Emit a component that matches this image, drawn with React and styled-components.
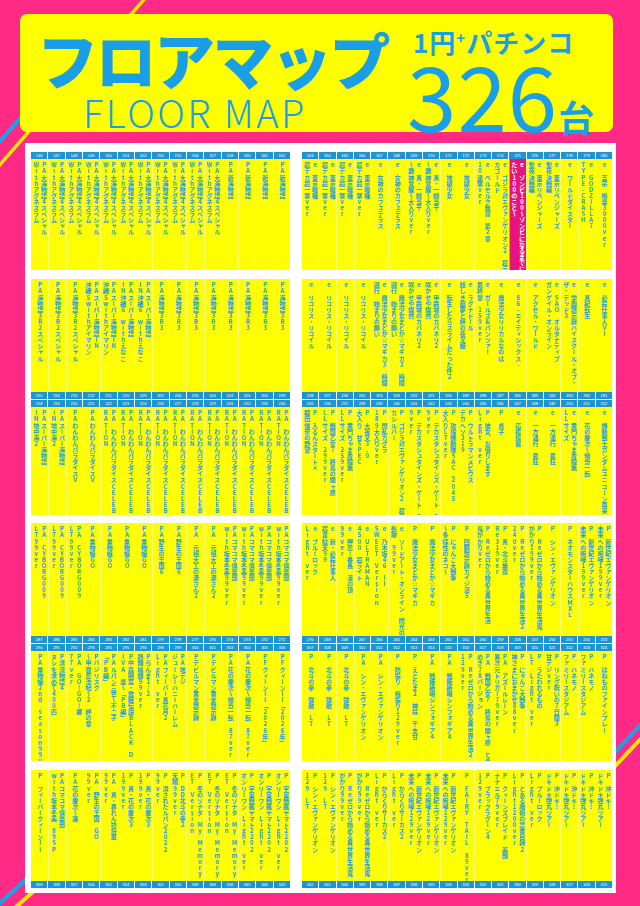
import React from 'react';
import styled, { createGlobalStyle } from 'styled-components';

const GlobalStyle = createGlobalStyle`
  html, body {
    margin: 0;
    padding: 0;
  }

  body {
    background: #fe2a86;
    font-family: "Noto Sans CJK JP", "Noto Sans", sans-serif;
  }
`;

const Page = styled.div`
  position: relative;
  width: 640px;
  height: 906px;
  overflow: hidden;
  box-sizing: border-box;
  padding-top: 14px;
  background: #fe2a86;
`;

const Decor = styled.svg`
  position: absolute;
  top: 0;
  left: 0;
  z-index: 0;
`;

const Header = styled.header`
  position: relative;
  z-index: 1;
  display: flex;
  width: 593px;
  height: 118px;
  margin-left: 20px;
  box-sizing: border-box;
  padding: 8px 0 0 17px;
  border-radius: 7px;
  background: #ffff00;
  color: #1a9fe6;
`;

const TitleBox = styled.div`
  display: flex;
  flex-direction: column;
  width: 374px;
`;

const TitleJa = styled.h1`
  margin: 0;
  font-size: 61px;
  font-weight: 900;
  line-height: 74px;
  letter-spacing: -2.5px;
  white-space: nowrap;
`;

const TitleEn = styled.div`
  margin: -4px 0 0 46px;
  font-size: 38px;
  font-weight: 300;
  line-height: 40px;
  letter-spacing: 2.5px;
  white-space: nowrap;
`;

const CountBox = styled.div`
  display: flex;
  flex-direction: column;
  margin-left: 2px;
`;

const Kind = styled.div`
  margin-top: 4px;
  font-size: 26px;
  font-weight: 700;
  line-height: 32px;
  letter-spacing: 1px;
  white-space: nowrap;

  sup {
    font-size: 15px;
    vertical-align: 9px;
    line-height: 0;
  }
`;

const CountRow = styled.div`
  display: flex;
  align-items: baseline;
  margin: -9px 0 0 -6px;
  white-space: nowrap;
`;

const Count = styled.span`
  font-size: 89px;
  font-weight: 400;
  line-height: 89px;
  letter-spacing: 1px;
`;

const Unit = styled.span`
  margin-left: 0;
  font-size: 36px;
  font-weight: 700;
  line-height: 36px;
`;

const Panel = styled.main`
  position: relative;
  z-index: 1;
  display: flex;
  flex-direction: column;
  justify-content: space-between;
  width: 591px;
  height: 750px;
  margin: 11px 0 0 25px;
  box-sizing: border-box;
  padding: 9px 4px 5px 6px;
  background: #ffffff;
`;

const Band = styled.section`
  display: grid;
  grid-template-columns: 259px 310px;
  column-gap: 12px;
`;

const Block = styled.div`
  display: flex;
  flex-direction: column;
`;

const NumRow = styled.div`
  display: grid;
  grid-template-columns: repeat(${(p) => p.$n}, 1fr);
  column-gap: 1px;
  height: 7px;
  margin-bottom: ${(p) => (p.$gap ? '1px' : '0')};
  background: #ffffff;
`;

const NumCell = styled.div`
  overflow: hidden;
  background: #1d95d3;
  color: #ffffff;
  font-family: "Liberation Sans", Arial, sans-serif;
  font-size: 4px;
  line-height: 7px;
  text-align: center;
`;

const TextRow = styled.div`
  display: grid;
  grid-template-columns: repeat(${(p) => p.$n}, 1fr);
  height: ${(p) => p.$h}px;
  background: #ffff00;
`;

const Cell = styled.div`
  display: flex;
  justify-content: center;
  overflow: hidden;
  box-sizing: border-box;
  padding-top: 3px;
  border-left: 1px solid rgba(255, 255, 255, 0.45);
  background: ${(p) => (p.$hl ? '#e8137d' : 'transparent')};
  color: ${(p) => (p.$hl ? '#ffffff' : '#1c9ce2')};

  &:first-child {
    border-left: none;
  }
`;

const VText = styled.span`
  writing-mode: vertical-rl;
  text-orientation: upright;
  font-size: 6.1px;
  font-weight: 700;
  line-height: 7.8px;
  white-space: nowrap;
`;

// [count, text] pairs expand into columns; "|" splits the vertical lines
const expand = (list) => list.flatMap(([c, t, hl]) => Array.from({ length: c }, () => ({ t, hl })));
const range = (a, b) => {
  const out = [];
  if (a <= b) for (let i = a; i <= b; i++) out.push(i);
  else for (let i = a; i >= b; i--) out.push(i);
  return out;
};

const band1 = {
  left: {
    top: [146, 147, 148, 149, 150, 151, 152, 154, 155, 156, 157, 158, 160, 161, 162],
    topText: expand([
      [11, 'PA大海物語4スペシャル|Withアグネスラム'],
      [4, 'PA新海物語'],
    ]),
  },
  right: {
    top: range(163, 180),
    topText: expand([
      [4, 'e 東京喰種|超デカ超一撃ver'],
      [2, 'e 女神のカフェテラス'],
      [2, 'e 真・一騎当千|〜覇神覚醒〜大入りver'],
      [2, 'e 地獄少女'],
      [1, 'e ベルセルク無双 第2章|10連撃ver'],
      [1, 'e ゴジラ対エヴァンゲリオン2 超デ|カゴールド'],
      [1, 'e ゾンビ100〜ゾンビになるまでにし|たい100のこと〜', true],
      [2, 'e 東京リベンジャーズ|聖夜決戦編'],
      [1, 'e ワールドダイスター'],
      [1, 'e GODZILLA7|TYPE-CRASH'],
      [1, 'e 吉宗 極楽3000ver'],
    ]),
  },
};

const band2 = {
  left: {
    upper: expand([
      [3, 'PA海物語3R2スペシャル'],
      [2, 'PAスーパー海物語IN|沖縄5withアイマリン'],
      [2, 'PAスーパー海物語|IN沖縄6 withえなこ'],
      [8, 'PA海物語3R3'],
    ]),
    top: [215, 214, 213, 212, 211, 210, 209, 207, 206, 205, 204, 203, 201, 200, 199],
    bottom: [218, 219, 220, 221, 222, 223, 224, 226, 227, 228, 229, 231, 232, 233, 234],
    lower: expand([
      [2, 'PAスーパー海物語|IN地中海2'],
      [2, 'PAわんわんパラダイスV'],
      [11, 'PA わんわんパラダイスCELEB|RATION'],
    ]),
  },
  right: {
    upper: expand([
      [4, 'e リコリス・リコイル'],
      [2, 'e 魔法少女まどか☆マギカ3 時間|遡行 始まりの願い'],
      [2, 'e 甲鉄城のカバネリ2|咲かせや燦然'],
      [1, 'e 転生したらスライムだった件2'],
      [1, 'e ラグナドール|妖しき廻夢と絆の夜叉姫'],
      [1, 'e ガールズ&パンツァー|最終章 159ver'],
      [1, 'e 魔法少女リリカルなのは'],
      [1, 'e 86-エイティシックス-'],
      [1, 'e アクセル・ワールド'],
      [1, 'e SAO オルタナティブ|ガンゲイル・オンライン'],
      [1, 'e 学園黙示録ハイスクール・オブ・|ザ・デッド3'],
      [1, 'e 真紀転生'],
      [1, 'e 必殺仕事人VI'],
    ]),
    top: range(198, 181),
    bottom: range(235, 252),
    lower: expand([
      [1, 'P 入るんスタート×|織田信奈の野望'],
      [1, 'P 戦国乙女7 終焉の関ヶ原|LLサイズ 299ver'],
      [1, 'P 黄門ちゃま寿限無|LLサイズ 259ver'],
      [1, 'P 大夜叉3.0|大入り 甘SPEC'],
      [1, 'P 閃乱カグラ|189大入りver'],
      [1, 'P ゴジラ対エヴァンゲリオン2 超デ|カシルバー'],
      [2, 'P デカスタシュタインズ・ゲート 9|9ver'],
      [1, 'P 攻殻機動隊SAC_2045|大入りLTver'],
      [1, 'P ウルトラマンメビウス|デカヘソ319'],
      [1, 'P 彼女、お借りします|Light ver'],
      [1, 'P 貞子'],
      [1, 'e 応援搭載'],
      [2, 'e 一方通行 最狂'],
      [1, 'e 黄門ちゃま寿限無|LLサイズ'],
      [1, 'e 花の慶次〜傾奇一転'],
      [1, 'e 機動戦士ガンダムユニコーン再来'],
    ]),
  },
};

const band3 = {
  left: {
    upper: expand([
      [3, 'PA CYBORG009|LT99ver'],
      [4, 'PA乗物娘GO'],
      [2, 'PA野生の王国6'],
      [2, 'PA 元祖大工の源さん2'],
      [4, 'PAコマコマ倶楽部|with坂本冬美99ver'],
    ]),
    top: [287, 286, 285, 284, 283, 282, 281, 279, 278, 277, 276, 274, 273, 272, 271],
    bottom: [290, 291, 292, 293, 294, 295, 296, 298, 299, 300, 301, 303, 304, 305, 306],
    lower: expand([
      [1, 'PA乗物娘2nd season99ver'],
      [1, 'P清流物語4|ヌシを求めて400匹'],
      [1, 'PA GO!GO!郷|77ver'],
      [1, 'Pバジリスク|〜甲賀忍法帖〜2 絆の章'],
      [1, 'PAルパン三世〜不二子|「PB編」'],
      [1, 'P中森明菜・歌姫伝説BLACK D|IVA 楽〜「PB編」'],
      [1, 'Pらんま1/2|熱闘格闘99ver'],
      [1, 'PAフィーバー真花月2|Light ver'],
      [1, 'PA地デジ|ジューシーハニーハーレム'],
      [2, 'Pデビルマン黄金黙示録'],
      [2, 'PA花の慶次〜傾奇一転 87ver'],
      [2, 'PFクィーンII「2026年」'],
    ]),
  },
  right: {
    upper: expand([
      [1, 'e ブルーロック|Light ver'],
      [1, 'e 新・必殺仕事人|超韋駄天99'],
      [1, 'e 押忍!番長 漢の頂|99ver'],
      [1, 'e ULTRAMAN|4500 超ライト'],
      [1, 'e 乃木坂46 II|SWEET Version'],
      [1, 'e ソードアート・オンライン 閃光の|軌跡 99ver'],
      [2, 'P 魔法少女まどか☆マギカ'],
      [1, 'P にゃんこ大戦争|〜多様性のネコ〜'],
      [1, 'P 回胴黙示録カイジ沼5'],
      [1, 'P Reゼロから始める異世界生活|鬼がかりver'],
      [1, 'P 真・北斗無双|Re319ver'],
      [1, 'P Reゼロから始める異世界生活2|240ver'],
      [1, 'P Reゼロから始める異世界生活鬼|がかり199ver'],
      [1, 'P シン・エヴァンゲリオン'],
      [1, 'P ネオモンスターハウスMXL'],
      [2, 'P 新世紀エヴァンゲリオン|未来への咆哮199ver'],
    ]),
    top: range(270, 253),
    bottom: range(307, 324),
    lower: expand([
      [3, 'P 北斗の拳 強敵 LT'],
      [2, 'PA シン・エヴァンゲリオン'],
      [1, 'P 防振り 極振り129ver'],
      [1, 'P えとたま2 神様 干支甘'],
      [2, 'PA 戦姫絶唱シンフォギア4'],
      [1, 'P Reゼロから始める異世界生活2|129ver'],
      [1, 'PA 戦国乙女7 終焉の関ヶ原 とき|めき78バージョン'],
      [1, 'PA アズールレーン|異次元トリガー79ver'],
      [1, 'P にゃんこ大戦争|神さまにおまかせ88ver'],
      [1, 'P うたわれるもの|LT Light ver'],
      [1, 'P リング呪いの7日間3|甘デジver'],
      [2, 'P ハネモノ|ファミリースタジアム'],
      [1, 'P はねものファインプレー'],
    ]),
  },
};

const band4 = {
  left: {
    upperText: expand([
      [1, 'P フィーバークィーンII'],
      [1, 'PAコマコマ倶楽部|with坂本冬美 89SP'],
      [1, 'PA花の慶次〜蓮'],
      [1, 'PA 野生の王国 GO|99ver'],
      [1, 'PA 真・暴れん坊将軍|99ver'],
      [2, 'P 真・花の慶次3|199ver'],
      [1, 'P 消されたルパン2022|99ver'],
      [1, 'P DD北斗の拳2|天翔99ver'],
      [3, 'P 冬のソナタ My Memory SWE|ET Version'],
      [3, 'P 宇宙戦艦ヤマト2202|オンリーワン Light ver'],
    ]),
    bottom: [359, 358, 357, 356, 355, 354, 353, 351, 350, 349, 348, 346, 345, 344, 343],
  },
  right: {
    upperText: expand([
      [2, 'P シン・エヴァンゲリオン|129 LT'],
      [2, 'P Reゼロから始める異世界生活鬼|がかり99ver'],
      [2, 'P からくりサーカス2|Light ver'],
      [3, 'P 新世紀エヴァンゲリオン|未来への咆哮129ver'],
      [1, 'P FAIRY TAIL 89ver'],
      [1, 'P ブラックラグーン4|129ver'],
      [1, 'P クィーンズブレイド 美闘|ナナエル79ver'],
      [1, 'P とある魔術の禁書目録2|Light1200ver'],
      [1, 'P ブルーロック|Light ver'],
      [4, 'P 沖ドキ!|ドキドキ弾丸ツアー'],
    ]),
    bottom: range(342, 325),
  },
};

function Numbers({ nums, gap }) {
  return (
    <NumRow $n={nums.length} $gap={gap}>
      {nums.map((n) => (
        <NumCell key={n}>{n}</NumCell>
      ))}
    </NumRow>
  );
}

function Machines({ items, height }) {
  return (
    <TextRow $n={items.length} $h={height}>
      {items.map((m, i) => (
        <Cell key={i} $hl={m.hl}>
          <VText>
            {m.t.split('|').map((line, j) => (
              <React.Fragment key={j}>
                {j > 0 && <br />}
                {line}
              </React.Fragment>
            ))}
          </VText>
        </Cell>
      ))}
    </TextRow>
  );
}

function SingleTop({ data }) {
  return (
    <Block>
      <Numbers nums={data.top} />
      <Machines items={data.topText} height={111} />
    </Block>
  );
}

function DoubleSided({ data, upper, lower }) {
  return (
    <Block>
      <Machines items={data.upper} height={upper} />
      <Numbers nums={data.top} gap />
      <Numbers nums={data.bottom} />
      <Machines items={data.lower} height={lower} />
    </Block>
  );
}

function SingleBottom({ data }) {
  return (
    <Block>
      <Machines items={data.upperText} height={111} />
      <Numbers nums={data.bottom} />
    </Block>
  );
}

function Stripes() {
  return (
    <Decor width="640" height="906" viewBox="0 0 640 906">
      <line x1="80" y1="50" x2="-20" y2="164" stroke="#1aa3e8" strokeWidth="4" />
      <line x1="148" y1="-5" x2="-10" y2="176" stroke="#ffe600" strokeWidth="3.5" />
      <line x1="60" y1="849" x2="-10" y2="912" stroke="#1aa3e8" strokeWidth="4" />
      <line x1="62" y1="866" x2="8" y2="914" stroke="#ffe600" strokeWidth="4" />
      <line x1="595" y1="773" x2="650" y2="715" stroke="#1aa3e8" strokeWidth="4" />
      <line x1="600" y1="782" x2="652" y2="727" stroke="#ffe600" strokeWidth="4" />
    </Decor>
  );
}

export default function App() {
  return (
    <>
      <GlobalStyle />
      <Page>
        <Stripes />
        <Header>
          <TitleBox>
            <TitleJa>フロアマップ</TitleJa>
            <TitleEn>FLOOR MAP</TitleEn>
          </TitleBox>
          <CountBox>
            <Kind>
              1円<sup>+</sup>パチンコ
            </Kind>
            <CountRow>
              <Count>326</Count>
              <Unit>台</Unit>
            </CountRow>
          </CountBox>
        </Header>
        <Panel>
          <Band>
            <SingleTop data={band1.left} />
            <SingleTop data={band1.right} />
          </Band>
          <Band>
            <DoubleSided data={band2.left} upper={113} lower={108} />
            <DoubleSided data={band2.right} upper={113} lower={108} />
          </Band>
          <Band>
            <DoubleSided data={band3.left} upper={113} lower={110} />
            <DoubleSided data={band3.right} upper={113} lower={110} />
          </Band>
          <Band>
            <SingleBottom data={band4.left} />
            <SingleBottom data={band4.right} />
          </Band>
        </Panel>
      </Page>
    </>
  );
}
